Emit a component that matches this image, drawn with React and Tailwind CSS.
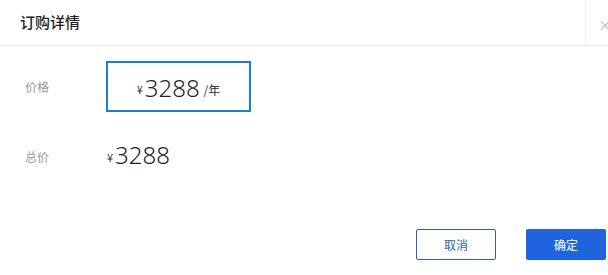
import React from "react";

export default function App() {
  const font = { fontFamily: '"Noto Sans CJK SC", "Noto Sans", sans-serif' };
  return (
    <div className="w-[608px] h-[275px] bg-white overflow-hidden text-[#333]" style={font}>
      <div className="flex h-[46px] border-b border-[#eeeeee]">
        <div className="flex-1 flex items-center pl-[20px] text-[15px] font-medium text-[#222]">订购详情</div>
        <div className="w-[23px] border-l border-[#eeeeee] flex items-center justify-end pt-[2px]">
          <span className="text-[14px] text-[#bbb] -mr-[4px] leading-none">×</span>
        </div>
      </div>

      <div className="flex items-center mt-[15px]">
        <div className="w-[106px] pl-[25px] text-[12px] text-[#999]">价格</div>
        <div className="w-[145px] h-[51px] border-2 border-[#1a7fd8] flex items-center justify-center pt-[2px]">
          <span className="text-[11px] mr-[2px] mt-[3px]">¥</span>
          <span className="font-['Noto_Sans',sans-serif] text-[24px] font-light leading-none text-[#222]">3288</span>
          <span className="text-[12px] ml-[4px] mt-[4px]">/年</span>
        </div>
      </div>

      <div className="flex items-center mt-[31px]">
        <div className="w-[107px] pl-[25px] text-[12px] text-[#999] mt-[4px]">总价</div>
        <span className="text-[11px] mr-[2px] mt-[4px]">¥</span>
        <span className="font-['Noto_Sans',sans-serif] text-[24px] font-light leading-none text-[#222]">3288</span>
      </div>

      <div className="flex justify-end gap-[30px] mt-[62px] pr-[2px]">
        <button className="w-[80px] h-[31px] border border-[#2a62c9] rounded-[2px] text-[12px] text-[#1f5fbf] bg-white">取消</button>
        <button className="w-[80px] h-[31px] rounded-[2px] text-[12px] text-white bg-[#1f64dd]">确定</button>
      </div>
    </div>
  );
}
